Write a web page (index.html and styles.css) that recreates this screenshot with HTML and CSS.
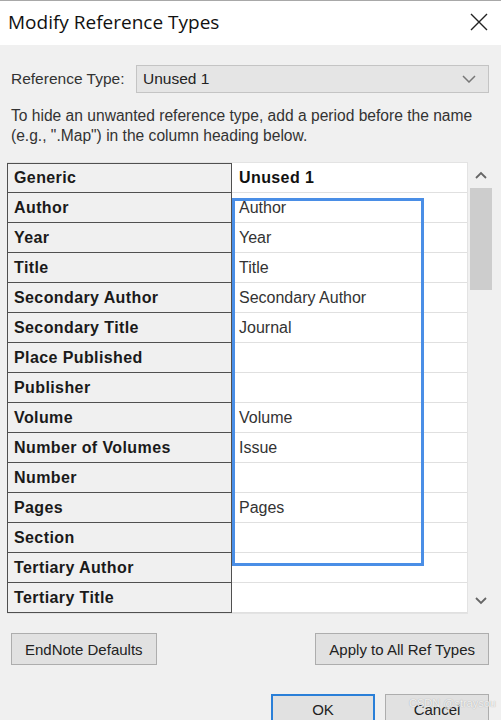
FILE: index.html
```html
<!DOCTYPE html>
<html lang="en">
<head>
    <meta charset="UTF-8">
    <title>Modify Reference Types</title>
    <link rel="stylesheet" href="styles.css">
</head>
<body>
    <div class="titlebar">
        <span class="title">Modify Reference Types</span>
        <svg class="close" width="18" height="18" viewBox="0 0 18 18">
            <path d="M1 1 L17 17 M17 1 L1 17" stroke="#222" stroke-width="1.4" fill="none"/>
        </svg>
    </div>

    <div class="dialog">
        <div class="type-row">
            <span class="label">Reference Type:</span>
            <div class="select">
                <span>Unused 1</span>
                <svg width="14" height="8" viewBox="0 0 14 8">
                    <path d="M1 1 L7 7 L13 1" stroke="#777" stroke-width="1.5" fill="none"/>
                </svg>
            </div>
        </div>

        <p class="hint">To hide an unwanted reference type, add a period before the name (e.g., ".Map") in the column heading below.</p>

        <div class="grid-wrap">
            <div class="fields" id="fields">
                <!-- rows filled by script -->
            </div>
            <div class="highlight"></div>
            <div class="scrollbar">
                <svg class="arrow" width="12" height="8" viewBox="0 0 12 8">
                    <path d="M1 7 L6 2 L11 7" stroke="#666" stroke-width="1.8" fill="none"/>
                </svg>
                <div class="thumb"></div>
                <div class="track"></div>
                <svg class="arrow" width="12" height="8" viewBox="0 0 12 8">
                    <path d="M1 1 L6 6 L11 1" stroke="#666" stroke-width="1.8" fill="none"/>
                </svg>
            </div>
        </div>

        <div class="actions">
            <button class="button">EndNote Defaults</button>
            <button class="button">Apply to All Ref Types</button>
        </div>

        <div class="footer">
            <button class="button ok">OK</button>
            <button class="button">Cancel</button>
        </div>
    </div>

    <span class="watermark">CSDN @straysou</span>

    <script>
        const rows = [
            ["Generic", "Unused 1"],
            ["Author", "Author"],
            ["Year", "Year"],
            ["Title", "Title"],
            ["Secondary Author", "Secondary Author"],
            ["Secondary Title", "Journal"],
            ["Place Published", ""],
            ["Publisher", ""],
            ["Volume", "Volume"],
            ["Number of Volumes", "Issue"],
            ["Number", ""],
            ["Pages", "Pages"],
            ["Section", ""],
            ["Tertiary Author", ""],
            ["Tertiary Title", ""]
        ];

        const fields = document.getElementById('fields');
        rows.forEach((row, i) => {
            const name = document.createElement('div');
            name.className = 'cell name';
            name.textContent = row[0];
            const value = document.createElement('div');
            value.className = i === 0 ? 'cell value head' : 'cell value';
            value.textContent = row[1];
            fields.appendChild(name);
            fields.appendChild(value);
        });
    </script>
</body>
</html>
```

FILE: styles.css
```css
/* Janela */
body {
    margin: 0;
    background-color: #f0f0f0;
    font-family: 'Liberation Sans', Arial, sans-serif;
    color: #1a1a1a;
    width: 501px;
    height: 720px;
    overflow: hidden;
    position: relative;
}
.titlebar {
    height: 44px;
    background-color: #ffffff;
    border-top: 1px solid #a8a8a8;
    display: flex;
    align-items: center;
    justify-content: space-between;
    padding: 0 13px 0 8px;
}
.title {
    font-family: 'Open Sans', 'Noto Sans', sans-serif;
    font-size: 19px;
    color: #111;
    margin-top: -2px;
}
.close {
    margin-top: -2px;
}

/* Conteudo */
.dialog {
    padding: 20px 12px 0 7px;
}
.type-row {
    display: flex;
    align-items: center;
    padding-left: 4px;
}
.label {
    font-size: 15.5px;
    color: #333;
    width: 125px;
}
.select {
    flex: 1;
    height: 26px;
    background-color: #e5e5e5;
    border: 1px solid #c4c4c4;
    display: flex;
    align-items: center;
    justify-content: space-between;
    padding: 0 12px 0 6px;
    font-size: 15.5px;
    color: #222;
}
.hint {
    margin: 13px 0 0 4px;
    font-size: 15.6px;
    line-height: 20px;
    color: #333;
}

/* Tabela */
.grid-wrap {
    margin-top: 16px;
    display: flex;
    position: relative;
}
.fields {
    display: grid;
    grid-template-columns: 225px 235px;
    grid-auto-rows: 30px;
    border: 1px solid #e3e3e3;
    border-left: none;
}
.cell {
    display: flex;
    align-items: center;
    font-size: 16px;
    white-space: nowrap;
    box-sizing: border-box;
}
.name {
    background-color: #f0f0f0;
    border: 1px solid #505050;
    border-top: none;
    font-weight: bold;
    letter-spacing: 0.4px;
    padding-left: 6px;
    color: #1a1a1a;
}
.name:first-child {
    border-top: 1px solid #505050;
}
.value {
    background-color: #ffffff;
    border-bottom: 1px solid #e0e0e0;
    padding-left: 7px;
    color: #333;
}
.head {
    font-weight: bold;
    letter-spacing: 0.4px;
    color: #111;
}
.highlight {
    position: absolute;
    left: 225px;
    top: 36px;
    width: 186px;
    height: 362px;
    border: 3px solid #4a8ee6;
}
.scrollbar {
    width: 26px;
    margin-left: 2px;
    display: flex;
    flex-direction: column;
    align-items: center;
}
.arrow {
    margin: 9px 0;
}
.thumb {
    width: 22px;
    height: 102px;
    background-color: #cdcdcd;
}
.track {
    flex: 1;
}

/* Botoes */
.actions {
    display: flex;
    justify-content: space-between;
    padding: 0 0 0 4px;
    margin-top: 19px;
}
.button {
    font-family: 'Liberation Sans', Arial, sans-serif;
    font-size: 15px;
    color: #222;
    background-color: #e1e1e1;
    border: 1px solid #adadad;
    height: 32px;
    padding: 0 13px;
}
.footer {
    display: flex;
    justify-content: flex-end;
    gap: 10px;
    margin-top: 29px;
}
.footer .button {
    width: 104px;
    height: 30px;
}
.ok {
    border: 2px solid #2a7fd8;
}
.watermark {
    position: absolute;
    left: 409px;
    top: 697px;
    font-size: 11px;
    color: rgba(255, 255, 255, 0.85);
    text-shadow: 0 0 1px #999;
}
```
